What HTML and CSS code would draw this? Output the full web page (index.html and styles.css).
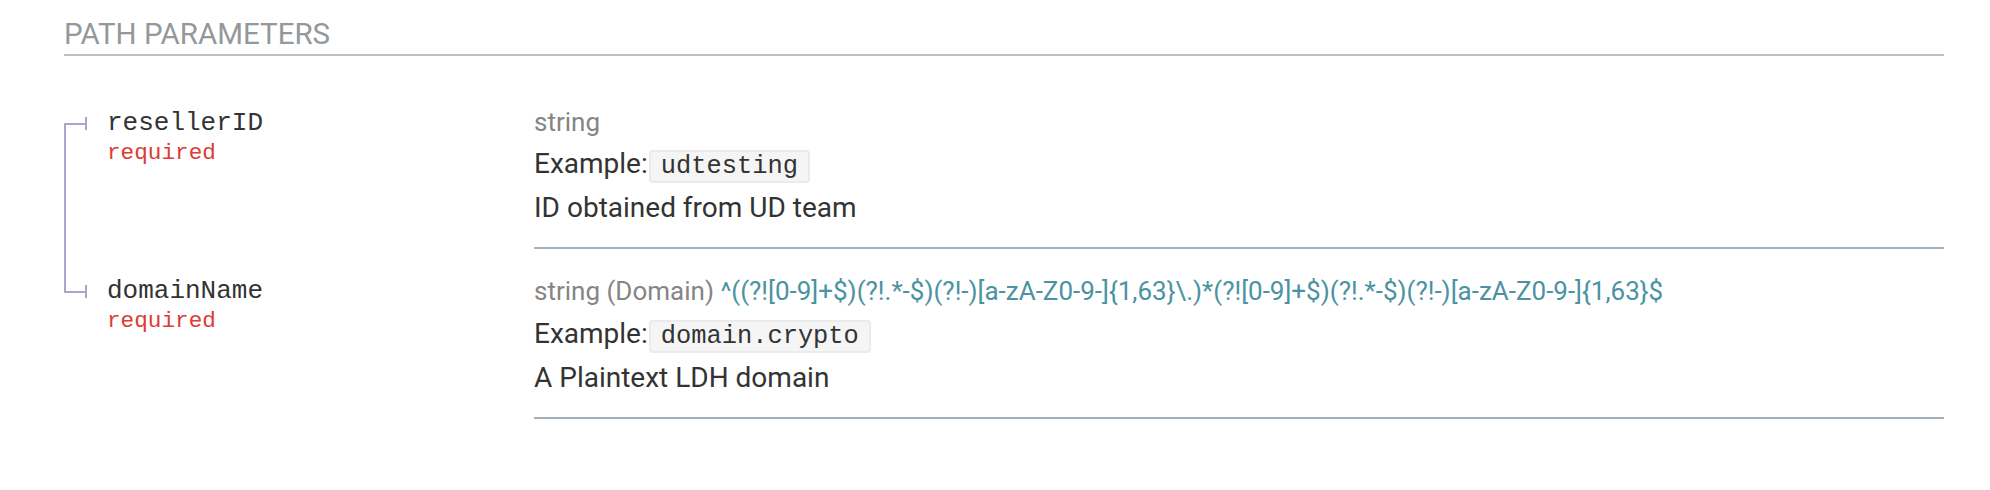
FILE: index.html
```html
<!DOCTYPE html>
<html lang="en">
<head>
<meta charset="utf-8">
<title>Path parameters</title>
<link rel="stylesheet" href="styles.css">
</head>
<body>
<section class="params">
  <h5 class="params-title">Path Parameters</h5>
  <div class="param-list">
    <div class="param-row first">
      <div class="param-name">
        <span class="bullet"></span>
        <div class="name-text">
          <span class="name">resellerID</span>
          <span class="required">required</span>
        </div>
      </div>
      <div class="param-details">
        <div class="type-line"><span class="type">string</span></div>
        <div class="example-line"><span class="label">Example:</span><code class="example">udtesting</code></div>
        <p class="desc">ID obtained from UD team</p>
      </div>
    </div>
    <div class="param-row last">
      <div class="param-name">
        <span class="bullet"></span>
        <div class="name-text">
          <span class="name">domainName</span>
          <span class="required">required</span>
        </div>
      </div>
      <div class="param-details">
        <div class="type-line with-pattern"><span class="type">string (Domain)</span> <span class="pattern">^((?![0-9]+$)(?!.*-$)(?!-)[a-zA-Z0-9-]{1,63}\.)*(?![0-9]+$)(?!.*-$)(?!-)[a-zA-Z0-9-]{1,63}$</span></div>
        <div class="example-line"><span class="label">Example:</span><code class="example">domain.crypto</code></div>
        <p class="desc">A Plaintext LDH domain</p>
      </div>
    </div>
  </div>
</section>
</body>
</html>
```

FILE: styles.css
```css
* {
  box-sizing: border-box;
}

html,
body {
  margin: 0;
  background: #ffffff;
}

body {
  font-family: Roboto, "Liberation Sans", sans-serif;
  font-size: 28px;
  color: #333333;
}

.params {
  padding: 15px 46px 0 64px;
}

.params-title {
  margin: 0 0 25px;
  font-size: 29.5px;
  line-height: 39px;
  font-weight: 400;
  text-transform: uppercase;
  color: #93989b;
  border-bottom: 2px solid #bec1c3;
}

.param-row {
  display: grid;
  grid-template-columns: 470px 1fr;
}

.param-name {
  display: flex;
  align-items: flex-start;
  padding: 23px 10px 0 0;
}

.param-row.first .param-name {
  background: linear-gradient(#a6a6cf, #a6a6cf) 0 42px / 2px 100% no-repeat;
}

.param-row.last .param-name {
  background: linear-gradient(#a6a6cf, #a6a6cf) 0 0 / 2px 44px no-repeat;
}

.bullet {
  display: flex;
  align-items: center;
  height: 39px;
  margin-right: 20px;
  flex: none;
}

.bullet::before {
  content: "";
  width: 21px;
  height: 2px;
  background: #a6a6cf;
}

.bullet::after {
  content: "";
  width: 2px;
  height: 13px;
  background: #a6a6cf;
}

.name-text {
  display: flex;
  flex-direction: column;
  font-family: "Liberation Mono", "DejaVu Sans Mono", monospace;
}

.name {
  font-size: 26px;
  line-height: 39px;
  color: #333333;
}

.required {
  font-size: 22.7px;
  line-height: 20px;
  color: #dc3c36;
}

.param-details {
  padding: 21px 0 19px;
  border-bottom: 2px solid #a2b1bb;
}

.type-line {
  font-size: 26px;
  line-height: 41px;
  color: #858585;
}

.type-line.with-pattern {
  line-height: 43px;
}

.pattern {
  color: #4b93a2;
}

.example-line {
  line-height: 41px;
}

.example {
  font-family: "Liberation Mono", "DejaVu Sans Mono", monospace;
  font-size: 25.4px;
  margin-left: 1px;
  padding: 0 10px;
  background: #f5f5f5;
  border: 2px solid #ebebeb;
  border-radius: 4px;
  color: #333333;
}

.desc {
  margin: 0;
  line-height: 41px;
}
```
